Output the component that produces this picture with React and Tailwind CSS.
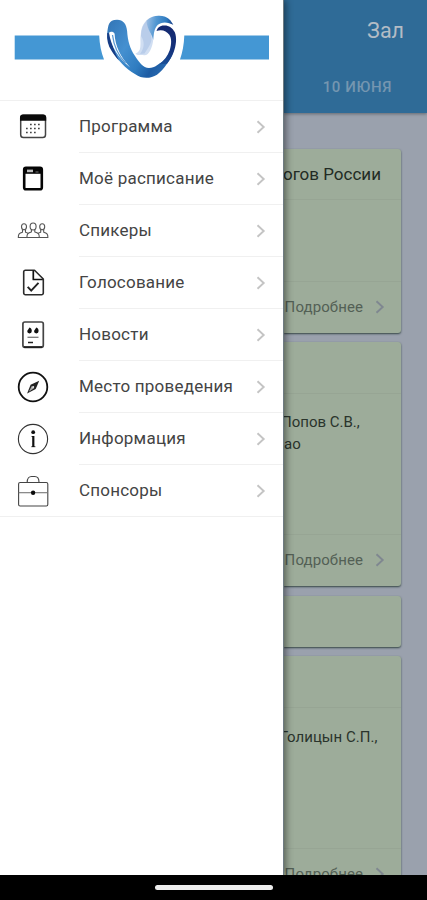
const CalendarIcon = () => (
    <g>
        <rect x="4.7" y="5.2" width="24.8" height="22.3" rx="2.8" fill="none" stroke="#444" strokeWidth="1.5" />
        <path d="M4 10.8V7.5a3 3 0 0 1 3-3h20.200a3 3 0 0 1 3 3v3.300z" fill="#0a0a0a" />
        <path d="M14 14.500h12M10 18.500h16M10 22.500h11" stroke="#444" strokeWidth="1.700" strokeDasharray="1.700 2.300" />
    </g>
)

const NotebookIcon = () => (
    <g>
        <rect x="8.200" y="5.700" width="17.600" height="21.600" rx="1.800" fill="#fff" stroke="#050505" strokeWidth="2.600" />
        <path d="M8 5.500h18v6.300H8z" fill="#050505" />
        <path d="M11 7.600h6v2.600h-6z" fill="#bbb" />
        <path d="M19.500 10h3" stroke="#777" strokeWidth="1" />
    </g>
)

const PeopleIcon = () => (
    <g fill="#fff" stroke="#555" strokeWidth="1.100" strokeLinejoin="round">
        <ellipse cx="8" cy="12.800" rx="2.500" ry="3" />
        <path d="M2.300 23.500c0-3.500 1-4.300 4.200-5.200v-2.500h3v2.500c2 .6 3 1.200 3.500 2.200v3z" />
        <ellipse cx="26.200" cy="12.800" rx="2.500" ry="3" />
        <path d="M31.900 23.500c0-3.500-1-4.300-4.200-5.200v-2.500h-3v2.500c-2 .6-3 1.200-3.500 2.200v3z" />
        <path d="M10.900 23.500c0-3.700 1.100-4.600 4.500-5.500v-2.600h3.400V18c3.400.9 4.500 1.800 4.500 5.500z" />
        <ellipse cx="17.100" cy="12.500" rx="3" ry="3.500" />
    </g>
)

const VoteIcon = () => (
    <g fill="none" strokeLinejoin="round">
        <path d="M18.500 4.200H9.400A1.700 1.700 0 0 0 7.700 6v21a1.700 1.700 0 0 0 1.700 1.700h16.200a1.700 1.700 0 0 0 1.700-1.700V13z" stroke="#2b2b2b" strokeWidth="1.600" />
        <path d="M17.300 4.500v9h9.500" stroke="#111" strokeWidth="1.700" />
        <path d="m11.700 20.800 3.500 3.900 7.300-7.900" stroke="#222" strokeWidth="1.900" />
    </g>
)

const NewsIcon = () => (
    <g>
        <rect x="6.900" y="4" width="20.400" height="25.300" rx="2" fill="#fff" stroke="#444" strokeWidth="1.700" />
        <path d="M8 29h18" stroke="#151515" strokeWidth="1.500" />
        <path d="M11.200 13a2.300 2.400 0 1 0 4.600 0c0-1.800-.8-2.800-2.300-3.500zM18 13a2.300 2.400 0 1 0 4.600 0c0-1.800-.8-2.800-2.300-3.500z" fill="#111" />
        <path d="M11.500 19.300h11" stroke="#777" strokeWidth="1.300" />
        <path d="M12 24.500h5" stroke="#222" strokeWidth="1.500" />
    </g>
)

const CompassIcon = () => (
    <g>
        <circle cx="17" cy="17" r="14.300" fill="none" stroke="#111" strokeWidth="1.800" />
        <path d="M23.200 10.700 19.700 19l-8.600 4.400 3.500-8.600z" fill="#222" />
        <path d="m12.800 21.700 3-5.600 2.200 2.200z" fill="#aaa" />
        <circle cx="17.200" cy="17" r="1" fill="#eee" />
    </g>
)

const InfoIcon = () => (
    <g>
        <circle cx="17" cy="17" r="14.600" fill="none" stroke="#333" strokeWidth="1.100" />
        <circle cx="17.200" cy="10.200" r="1.900" fill="#111" />
        <path d="M15.500 14.500h2M15.300 24.700h4.100" fill="none" stroke="#444" strokeWidth="1" />
        <path d="M17.300 14V25" stroke="#111" strokeWidth="2.200" />
    </g>
)

const BriefcaseIcon = () => (
    <g fill="none" stroke="#444" strokeWidth="1.100">
        <rect x="2.600" y="8.500" width="29.200" height="23.500" rx="1.500" />
        <path d="M11.200 8.300c0-4 2-5.800 4.300-5.800h3.200c2.300 0 4.300 1.800 4.300 5.800" />
        <path d="M2.600 18.700h29.200" stroke="#777" />
        <circle cx="17.100" cy="18.700" r="2.200" fill="#0a0a0a" stroke="none" />
    </g>
)

const menu = [
    { label: 'Программа', Icon: CalendarIcon },
    { label: 'Моё расписание', Icon: NotebookIcon },
    { label: 'Спикеры', Icon: PeopleIcon },
    { label: 'Голосование', Icon: VoteIcon },
    { label: 'Новости', Icon: NewsIcon },
    { label: 'Место проведения', Icon: CompassIcon },
    { label: 'Информация', Icon: InfoIcon },
    { label: 'Спонсоры', Icon: BriefcaseIcon },
]

const Chevron = ({ className }) => (
    <svg viewBox="0 0 10 14" className={`h-[14px] w-[10px] shrink-0 ${className}`} fill="none" stroke="currentColor" strokeWidth="1.900">
        <path d="m1.500 1.200 6.200 5.800-6.200 5.800" />
    </svg>
)

const Logo = () => (
    <svg viewBox="0 0 284 100" className="h-[100px] w-[284px]">
        <defs>
            <linearGradient id="swoosh" gradientUnits="userSpaceOnUse" x1="108" y1="25" x2="172" y2="65">
                <stop offset="0" stopColor="#3478b9" />
                <stop offset=".35" stopColor="#4590d0" />
                <stop offset=".62" stopColor="#2f7cc0" />
                <stop offset=".8" stopColor="#1d5ca4" />
                <stop offset="1" stopColor="#2b6db3" />
            </linearGradient>
            <linearGradient id="ring" gradientUnits="userSpaceOnUse" x1="170" y1="27" x2="160" y2="70">
                <stop offset="0" stopColor="#14286f" />
                <stop offset=".55" stopColor="#15357f" />
                <stop offset="1" stopColor="#1d5ca4" />
            </linearGradient>
            <linearGradient id="crest" gradientUnits="userSpaceOnUse" x1="145" y1="20" x2="173" y2="24">
                <stop offset="0" stopColor="#a9c4e6" />
                <stop offset=".4" stopColor="#5297d2" />
                <stop offset=".75" stopColor="#2f7bc0" />
                <stop offset="1" stopColor="#173f86" />
            </linearGradient>
        </defs>
        <path d="M14.700 35.600h84.500c.4 9 2 17 4.800 24H14.700zM184.300 35.600H269v24h-89c2.500-7 4-15 4.300-24z" fill="#4497d4" />
        {/* pale ribbon and its darker crest */}
        <path d="M135.300 53.700c3.500-1.500 4.700-3.500 5-6.700.6-5-.4-8 .5-13 .5-8 3.500-12 7.500-15 6-4.500 17-4.500 22 1.300l3 4.400c-5-3-12-3.500-15.500.3-3.800 4-4 9-4.600 15-.7 7-4.200 16-9.200 15.300-2.500-.6-6 .6-8.700-1.600z" fill="#d0def2" />
        <path d="M141 36c.5-8 2.500-12 6-15.500-.5 7 5 12 4.500 19-.4 5-4 9-7 14l-4.500.5c4.500-6 5-12 1-18z" fill="#b9cdea" />
        <path d="M146.500 20.500c6-6 18-6.500 23.800-.2l3 4.500c-5-3-12-3.500-15.800.3-3.500 3.500-3.700 9-4.300 14.900-1-5-3-7-4.500-10.500-1.500-3.500-2-5.500-2.200-9z" fill="url(#crest)" />
        <path d="M107.200 33c1.300-8 1-13 9.800-13.200 6-.1 9.500 4.200 10.100 11.200.7 10 3 18 7.600 24.500C139 62 143 68 149 68c3 0 5.500-1 8-2.700 5-3.300 8.500-5.300 11-10l5-3c-1.500 5-3.500 8.500-6 11.400-3 4.500-6.500 8.500-10 11-6.500 4.200-15.500 4.200-21.700-.4-5-3.300-9.500-6.300-13.300-10.600-4-4.200-7.500-8.500-10-13.400-3.500-5-5-11.300-4.800-17.300z" fill="url(#swoosh)" />
        <path d="M156.500 31c1-3.200 3-4.800 6-5.400 5.200-1 9.700 1.700 12.200 6.400 2.500 6 1.300 14-1 20-1.600 4.300-4 8.400-6.700 11.700l-8 .6c5-3.600 8.500-8 10.700-14 2-6.300 2-12-.4-15.500-2.800-4.100-7.800-5.800-12.800-3.800z" fill="url(#ring)" />
        <path d="M107.200 33c-.6 6.500.8 12.500 4.300 17.800 2 3.500 4.700 6.700 7.500 9.700-4.500-8-7.500-17-8.700-27z" fill="#163c85" />
        {/* highlight along the left edge */}
        <path d="M109 32.800c1.300-1.700 4.500-1.300 5.600.9.500 12.300 5.900 23.300 15.600 33.800-12.200-9.500-19-20.500-21.200-34.700z" fill="#fff" />
        <path d="M112.500 35c1.300 11 5.300 20 13 28" fill="none" stroke="#5c9ad2" strokeWidth="1.300" />
    </svg>
)

const MenuItem = ({ label, Icon, last }) => (
    <li className="flex h-[52px] pl-4">
        <svg viewBox="0 0 34 34" className="mt-[9px] h-[34px] w-[34px] shrink-0">
            <Icon />
        </svg>
        <div className={`ml-[29px] flex flex-1 items-center justify-between pr-[17px] ${last ? '' : 'border-b border-[#f0f0f0]'}`}>
            <span className="pb-[2px] text-[17px] leading-6 tracking-[0.22px] whitespace-nowrap text-[#444]">{label}</span>
            <Chevron className="text-[#c4c4c4]" />
        </div>
    </li>
)

const Drawer = () => (
    <aside className="z-10 w-[284px] shrink-0 border-r border-[#6e7b82] bg-white shadow-[2px_0_7px_rgba(0,0,0,0.45)]">
        <div className="h-[101px] border-b border-[#f0f0f0]">
            <Logo />
        </div>
        <ul className="h-[416px] border-b border-[#f0f0f0]">
            {menu.map((item, i) => (
                <MenuItem key={item.label} {...item} last={i === menu.length - 1} />
            ))}
        </ul>
    </aside>
)

const Card = ({ className, children }) => (
    <section className={`mr-[26px] flex shrink-0 flex-col overflow-hidden rounded-r-[3px] bg-[#9dac9a] shadow-[0_1px_2px_rgba(20,40,35,0.75)] ${className}`}>
        {children}
    </section>
)

const More = () => (
    <div className="mt-auto flex h-[52px] shrink-0 items-center justify-end border-t border-[#97a594] pr-4 text-[#536055]">
        <span className="pb-px text-[15px] tracking-[0.1px]">Подробнее</span>
        <Chevron className="mb-px ml-3 text-[#7f8790]" />
    </div>
)

const Schedule = () => (
    <main className="flex min-w-0 flex-1 flex-col overflow-hidden bg-[#9aa1ad]">
        <header className="flex h-[113px] shrink-0 flex-col items-end bg-[#2f6b97] shadow-[0_1px_3px_rgba(0,0,0,0.35)]">
            <h1 className="mt-[17px] mr-[23px] text-[21.500px] leading-7 text-[#b3bcc5]">Зал</h1>
            <p className="mt-[31px] mr-[35px] text-[15px] leading-[22px] font-medium tracking-[0.6px] text-[#7596b0]">10 ИЮНЯ</p>
        </header>

        <Card className="mt-9 h-[184px]">
            <h2 className="flex h-[51px] items-center justify-end border-b border-[#97a594] pt-px pr-5 text-[17px] whitespace-nowrap text-[#222b24]">огов России</h2>
            <More />
        </Card>

        <Card className="mt-[9px] h-[244px]">
            <div className="h-[52px] shrink-0 border-b border-[#97a594]" />
            <p className="mt-[17px] -ml-[3px] text-[15px] leading-[22px] whitespace-nowrap text-[#2a342c]">
                Попов С.В.,
                <br />
                <span className="ml-[3px]">ао</span>
            </p>
            <More />
        </Card>

        <Card className="mt-[10px] h-[51px]" />

        <Card className="mt-[9px] h-[244px]">
            <div className="h-[52px] shrink-0 border-b border-[#97a594]" />
            <p className="mt-[18px] -ml-1 text-[15px] leading-[22px] tracking-[0.05px] whitespace-nowrap text-[#2a342c]">Голицын С.П.,</p>
            <More />
        </Card>
    </main>
)

const App = () => (
    <div className="flex h-[900px] w-[427px] flex-col overflow-hidden bg-black font-['Roboto',sans-serif]">
        <div className="flex h-[875px] overflow-hidden">
            <Drawer />
            <Schedule />
        </div>
        <footer className="z-20 flex h-[25px] justify-center bg-black pt-[9.500px]">
            <div className="h-[5.500px] w-[118px] rounded-full bg-[#ededed]" />
        </footer>
    </div>
)

export default App
